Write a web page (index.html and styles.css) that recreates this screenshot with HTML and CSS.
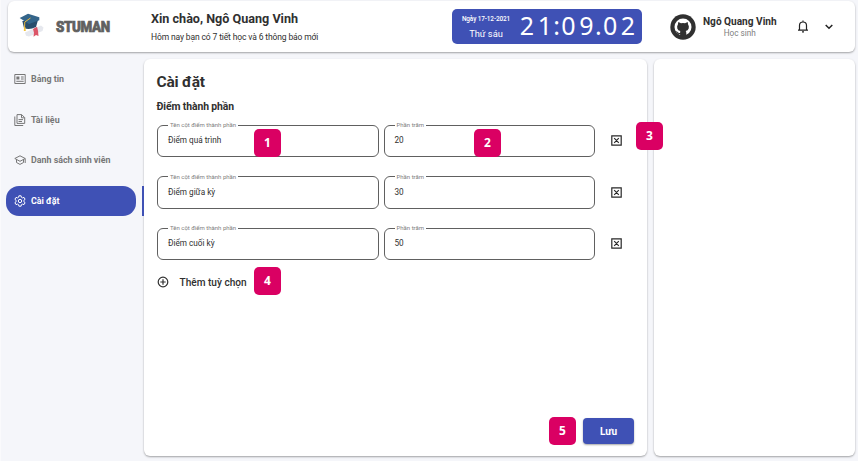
FILE: index.html
```html
<!DOCTYPE html>
<html lang="vi">
<head>
<meta charset="utf-8">
<title>Stuman</title>
<link rel="stylesheet" href="styles.css">
</head>
<body>
<div class="app">
  <header class="header card">
    <div class="brand">
      <svg class="brand-icon" width="26" height="26" viewBox="0 0 26 26">
        <path d="M6 19.500 22 12.500l2.500 2-1 3.500L10 23.500l-3-.8z" fill="#e6e8ee"/>
        <path d="M14 16l4-2.300 1 4 .5 5.300-2.500-1-2.500 1.800.5-4z" fill="#dc5568"/>
        <path d="M3.300 8 5 15q5 2.500 12-1l2-7z" fill="#294d6c"/>
        <path d="M.7 5 9 .8l11.300 3.500v3L10 11z" fill="#34658a"/>
        <path d="M11.500 5 5.800 9l-.3 6" fill="none" stroke="#e9b93f" stroke-width="1"/>
        <path d="M5 14h1.400l.4 4H4.800z" fill="#efc13f"/>
      </svg>
      <span class="brand-name">STUMAN</span>
    </div>
    <div class="greeting">
      <h1>Xin chào, Ngô Quang Vinh</h1>
      <p>Hôm nay bạn có 7 tiết học và 6 thông báo mới</p>
    </div>
    <div class="clock">
      <div class="date"><span class="day">Ngày 17-12-2021</span><span class="weekday">Thứ sáu</span></div>
      <div class="time"><i>2</i><i>1</i><i class="sep">:</i><i>0</i><i>9</i><i class="sep">.</i><i>0</i><i>2</i></div>
    </div>
    <div class="user">
      <svg width="26" height="26" viewBox="0 0 26 26">
        <circle cx="13" cy="13" r="12.700" fill="#303030"/>
        <circle cx="13" cy="13" r="8.500" fill="#fff"/>
        <path d="M8.300 8 11 9.300q2-.5 4 0L17.700 8l.4 2.600q1.200 1.600.6 3.800-.7 2.300-3 2.700.6.700.6 2v2.900h-6.200v-2q-2.500.5-3.300-1.500l-.9-1.200q1.100-.2 1.900 1 .8 1.100 2.300.7 0-1.200.2-1.900-2.400-.4-3-2.700-.6-2.200.6-3.800z" fill="#303030"/>
      </svg>
      <div class="user-text"><strong>Ngô Quang Vinh</strong><span>Học sinh</span></div>
    </div>
    <svg class="bell" width="12" height="13" viewBox="0 0 12 13" fill="none" stroke="#222" stroke-width="1.200">
      <path d="M1 10.200h10M2.500 10V5.500a3.500 3.500 0 0 1 7 0V10M6 2V.6"/><path d="M5 11.800h2"/>
    </svg>
    <svg class="chevron" width="8" height="6" viewBox="0 0 8 6" fill="none" stroke="#222" stroke-width="1.500"><path d="m.7 1 3.300 3.300L7.300 1"/></svg>
  </header>

  <nav class="sidebar">
    <a class="item">
      <svg width="12" height="12" viewBox="0 0 12 12" fill="none" stroke="currentColor"><path d="M.8 1.500h10.400v9H.8zM7 4h2.700M7 6h2.700M2.300 8.300h7.400"/><path d="M2.400 3.500h3v3h-3z" fill="currentColor" stroke="none"/></svg>
      <span>Bảng tin</span>
    </a>
    <a class="item">
      <svg width="12" height="12" viewBox="0 0 12 12" fill="none" stroke="currentColor"><path d="M3 .6h4.700l3 3v5.800H3zM.8 2.500v9h8.400M7.500.8v3h3M4.500 5.600H9M4.500 7.500H8"/></svg>
      <span>Tài liệu</span>
    </a>
    <a class="item">
      <svg width="12" height="12" viewBox="0 0 12 12" fill="none" stroke="currentColor"><path d="M.8 4.500 6 1.800l5.200 2.700L6 7.300zM2.500 5.500v3L6 10.400l3.500-1.900v-3M11.200 4.500v4.500"/></svg>
      <span>Danh sách sinh viên</span>
    </a>
    <a class="item active">
      <svg width="12" height="12" viewBox="0 0 12 12" fill="none" stroke="currentColor"><path d="M4.900.8h2.200l.3 1.500 1.100.6 1.500-.5 1.100 1.900-1.200 1v1.400l1.200 1L10 9.600l-1.500-.5-1.100.6-.3 1.500H4.900l-.3-1.500-1.100-.6-1.500.5L.9 7.700l1.200-1V5.300l-1.200-1L2 2.400l1.500.5 1.100-.6z"/><circle cx="6" cy="6" r="1.700"/></svg>
      <span>Cài đặt</span>
    </a>
  </nav>

  <main class="main card">
    <h2>Cài đặt</h2>
    <h3>Điểm thành phần</h3>
    <div class="rows">
      <div class="row">
        <fieldset class="field"><legend>Tên cột điểm thành phần</legend>Điểm quá trình</fieldset>
        <fieldset class="field"><legend>Phần trăm</legend>20</fieldset>
        <svg class="remove" width="11" height="11" viewBox="0 0 11 11" fill="none" stroke="#292929" stroke-width="1.200"><path d="M.8.800h9.400v9.400H.8zM3.200 3.200l4.600 4.600M7.800 3.200 3.200 7.800"/></svg>
        <b class="mark m1">1</b><b class="mark m2">2</b><b class="mark m3">3</b>
      </div>
      <div class="row">
        <fieldset class="field"><legend>Tên cột điểm thành phần</legend>Điểm giữa kỳ</fieldset>
        <fieldset class="field"><legend>Phần trăm</legend>30</fieldset>
        <svg class="remove" width="11" height="11" viewBox="0 0 11 11" fill="none" stroke="#292929" stroke-width="1.200"><path d="M.8.800h9.400v9.400H.8zM3.200 3.200l4.600 4.600M7.800 3.200 3.200 7.800"/></svg>
      </div>
      <div class="row">
        <fieldset class="field"><legend>Tên cột điểm thành phần</legend>Điểm cuối kỳ</fieldset>
        <fieldset class="field"><legend>Phần trăm</legend>50</fieldset>
        <svg class="remove" width="11" height="11" viewBox="0 0 11 11" fill="none" stroke="#292929" stroke-width="1.200"><path d="M.8.800h9.400v9.400H.8zM3.200 3.200l4.600 4.600M7.800 3.200 3.200 7.800"/></svg>
      </div>
    </div>
    <div class="add">
      <svg width="12" height="12" viewBox="0 0 12 12" fill="none" stroke="#303030" stroke-width="1.200"><circle cx="6" cy="6" r="4.800"/><path d="M3.300 6h5.400M6 3.300v5.400"/></svg>
      <span>Thêm tuỳ chọn</span>
      <b class="mark m4">4</b>
    </div>
    <div class="actions"><b class="mark m5">5</b><button>Lưu</button></div>
  </main>

  <aside class="side card"></aside>
</div>
</body>
</html>
```
FILE: styles.css
```css
* { box-sizing: border-box; }
body { margin: 0; background: #fff; font-family: Roboto, "Liberation Sans", sans-serif; color: #303030; }
h1, h2, h3, p { margin: 0; white-space: nowrap; }
span, strong { white-space: nowrap; }
svg { flex: none; display: block; }

.app {
  height: 461px;
  padding: 1px 3px 5px 0;
  background: #f5f6fa;
  border-left: 1px solid #fafafc;
  display: grid;
  grid-template: 51px 397px / 142.500px 503px 201px;
  row-gap: 7px;
  column-gap: 0;
}
.card { background: #fff; border-radius: 6px; box-shadow: 0 1px 2px rgba(0, 0, 0, .34); }

.header { grid-column: 1 / -1; margin-left: 7px; width: 847px; display: flex; align-items: center; }
.brand { width: 143px; padding-left: 12px; display: flex; align-items: center; }
.brand-icon { margin: -1px 1px 0 -1px; }
.brand-name { margin-left: 10px; font-size: 15px; font-weight: 900; letter-spacing: -.4px; color: #606060; -webkit-text-stroke: .7px #606060; transform: scaleX(.89); transform-origin: 0 50%; }
.greeting { width: 301px; padding-top: 2px; }
.greeting h1 { font-size: 12.600px; line-height: 16px; font-weight: 700; }
.greeting p { margin-top: 3px; font-size: 8.500px; letter-spacing: -.13px; line-height: 14px; }

.clock { width: 190px; height: 35px; border-radius: 5px; background: #3f51b5; color: #fff; display: flex; align-items: center; }
.date { flex: none; width: 66px; padding-left: 2px; display: flex; flex-direction: column; align-items: center; }
.day { font-size: 6.400px; letter-spacing: -.1px; line-height: 10px; font-weight: 500; }
.weekday { margin-top: 3px; font-size: 9.300px; line-height: 13px; }
.time { display: flex; font-family: "Noto Sans", sans-serif; font-size: 25px; line-height: 32px; padding-bottom: 4px; }
.time i { flex: none; width: 17.900px; text-align: center; font-style: normal; }
.time .sep { width: 5.800px; display: flex; justify-content: center; }

.user { margin-left: 28px; display: flex; align-items: center; gap: 7px; }
.user-text { display: flex; flex-direction: column; align-items: center; }
.user-text strong { font-size: 10.100px; line-height: 12px; }
.user-text span { font-size: 8.200px; line-height: 10px; color: #808080; }
.bell { margin-left: 20px; }
.chevron { margin-left: 16px; }

.sidebar { padding: 5px 7.500px 0 4.500px; display: flex; flex-direction: column; gap: 10.500px; }
.item { height: 30px; padding-left: 8.500px; display: flex; align-items: center; gap: 5px; color: #777; font-size: 8.900px; font-weight: 700; }
.active { position: relative; border-radius: 13px; background: #3f51b5; color: #fff; }
.active::after { content: ""; position: absolute; left: 136px; top: 0; width: 2.500px; height: 30px; background: #3f51b5; }

.main { padding: 13px 12.500px 11px 13px; display: flex; flex-direction: column; }
.main h2 { font-size: 15.500px; letter-spacing: -.2px; line-height: 20px; font-weight: 700; }
.main h3 { margin-top: 7px; font-size: 10.400px; letter-spacing: -.1px; line-height: 15px; font-weight: 700; }
.rows { margin-top: 7px; display: flex; flex-direction: column; gap: 15.500px; }
.row { position: relative; height: 36px; display: grid; grid-template-columns: 221.500px 211px 11px; column-gap: 5px; margin-left: .5px; }
.field { min-width: 0; height: 36px; margin: 0; padding: 6px 10px; border: 1px solid #606060; border-radius: 6px; font-size: 8.200px; line-height: 11px; }
.field legend { padding: 0 2px; margin-left: 0; height: 8px; font-size: 6px; line-height: 8px; color: #808080; }
.remove { margin: 14px 0 0 11px; }
.add { position: relative; margin-top: 7px; height: 30px; display: flex; align-items: center; gap: 11px; font-size: 10.100px; font-weight: 500; }
.actions { margin-top: auto; display: flex; align-items: center; justify-content: flex-end; gap: 7px; }
.actions button { width: 51px; height: 26px; padding: 0; border: 0; border-radius: 4px; background: #3f51b5; color: #fff; box-shadow: 0 1px 2px rgba(0, 0, 0, .35); font: 700 10px Roboto, sans-serif; }

.mark { width: 27px; height: 28px; border-radius: 5px; background: #da0063; color: #fff; font: 700 12px/27px "Noto Sans", sans-serif; text-align: center; }
.m1, .m2, .m3, .m4 { position: absolute; }
.m1 { left: 97px; top: 8px; }
.m2 { left: 317px; top: 8px; }
.m3 { left: 479px; top: 1px; }
.m4 { left: 97.500px; top: 0; }

.side { margin-left: 7px; width: 201px; }
```
